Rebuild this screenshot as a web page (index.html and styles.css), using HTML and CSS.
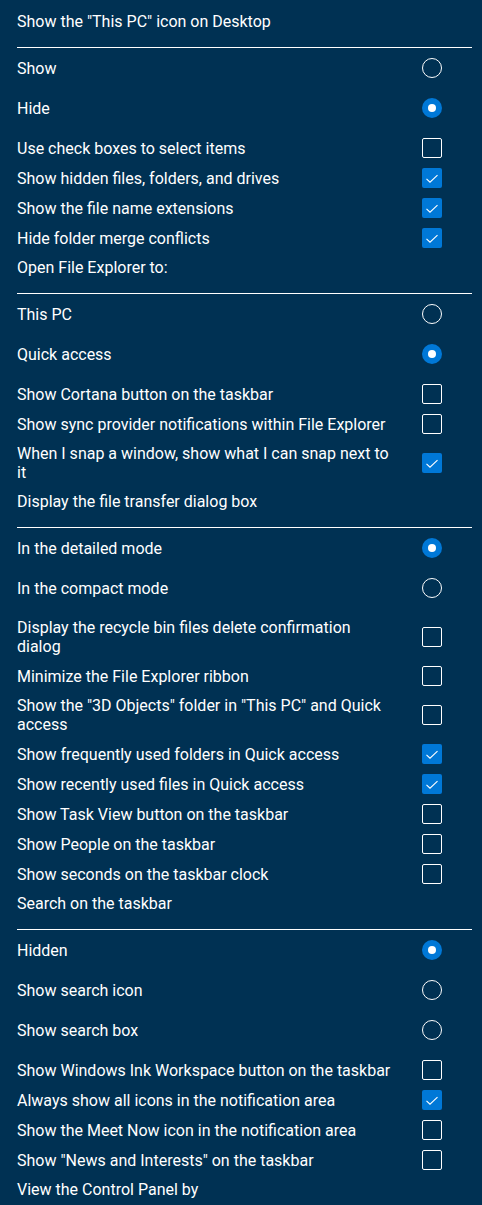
FILE: index.html
```html
<!DOCTYPE html>
<html lang="en">
<head>
<meta charset="utf-8">
<title>Settings</title>
<link rel="stylesheet" href="styles.css">
</head>
<body>
<main class="list">

  <div class="heading">Show the "This PC" icon on Desktop</div>
  <div class="group">
    <div class="radio-row"><span class="label">Show</span><span class="radio"></span></div>
    <div class="radio-row"><span class="label">Hide</span><span class="radio on"></span></div>
  </div>
  <div class="row"><span class="label">Use check boxes to select items</span><span class="box"></span></div>
  <div class="row"><span class="label">Show hidden files, folders, and drives</span><span class="box on"><svg viewBox="0 0 20 20"><path d="M4.5 10.8 L8 14.2 L15.5 7.2"/></svg></span></div>
  <div class="row"><span class="label">Show the file name extensions</span><span class="box on"><svg viewBox="0 0 20 20"><path d="M4.5 10.8 L8 14.2 L15.5 7.2"/></svg></span></div>
  <div class="row"><span class="label">Hide folder merge conflicts</span><span class="box on"><svg viewBox="0 0 20 20"><path d="M4.5 10.8 L8 14.2 L15.5 7.2"/></svg></span></div>

  <div class="heading">Open File Explorer to:</div>
  <div class="group">
    <div class="radio-row"><span class="label">This PC</span><span class="radio"></span></div>
    <div class="radio-row"><span class="label">Quick access</span><span class="radio on"></span></div>
  </div>
  <div class="row"><span class="label">Show Cortana button on the taskbar</span><span class="box"></span></div>
  <div class="row"><span class="label">Show sync provider notifications within File Explorer</span><span class="box"></span></div>
  <div class="row"><span class="label">When I snap a window, show what I can snap next to it</span><span class="box on"><svg viewBox="0 0 20 20"><path d="M4.5 10.8 L8 14.2 L15.5 7.2"/></svg></span></div>

  <div class="heading">Display the file transfer dialog box</div>
  <div class="group">
    <div class="radio-row"><span class="label">In the detailed mode</span><span class="radio on"></span></div>
    <div class="radio-row"><span class="label">In the compact mode</span><span class="radio"></span></div>
  </div>
  <div class="row"><span class="label">Display the recycle bin files delete confirmation dialog</span><span class="box"></span></div>
  <div class="row"><span class="label">Minimize the File Explorer ribbon</span><span class="box"></span></div>
  <div class="row"><span class="label">Show the "3D Objects" folder in "This PC" and Quick access</span><span class="box"></span></div>
  <div class="row"><span class="label">Show frequently used folders in Quick access</span><span class="box on"><svg viewBox="0 0 20 20"><path d="M4.5 10.8 L8 14.2 L15.5 7.2"/></svg></span></div>
  <div class="row"><span class="label">Show recently used files in Quick access</span><span class="box on"><svg viewBox="0 0 20 20"><path d="M4.5 10.8 L8 14.2 L15.5 7.2"/></svg></span></div>
  <div class="row"><span class="label">Show Task View button on the taskbar</span><span class="box"></span></div>
  <div class="row"><span class="label">Show People on the taskbar</span><span class="box"></span></div>
  <div class="row"><span class="label">Show seconds on the taskbar clock</span><span class="box"></span></div>

  <div class="heading">Search on the taskbar</div>
  <div class="group">
    <div class="radio-row"><span class="label">Hidden</span><span class="radio on"></span></div>
    <div class="radio-row"><span class="label">Show search icon</span><span class="radio"></span></div>
    <div class="radio-row"><span class="label">Show search box</span><span class="radio"></span></div>
  </div>
  <div class="row"><span class="label">Show Windows Ink Workspace button on the taskbar</span><span class="box"></span></div>
  <div class="row"><span class="label">Always show all icons in the notification area</span><span class="box on"><svg viewBox="0 0 20 20"><path d="M4.5 10.8 L8 14.2 L15.5 7.2"/></svg></span></div>
  <div class="row"><span class="label">Show the Meet Now icon in the notification area</span><span class="box"></span></div>
  <div class="row"><span class="label">Show "News and Interests" on the taskbar</span><span class="box"></span></div>

  <div class="heading last">View the Control Panel by</div>
</main>
</body>
</html>
```

FILE: styles.css
```css
* { box-sizing: border-box; }

html, body {
  margin: 0;
  padding: 0;
  background: #003153;
}

body {
  font-family: Roboto, "Noto Sans", "Liberation Sans", sans-serif;
  font-size: 16px;
  line-height: 19px;
  color: #ffffff;
}

.list {
  display: flex;
  flex-direction: column;
  padding: 7px 10px 0 17px;
}

.heading {
  height: 41px;
  padding-top: 5px;
  border-bottom: 1px solid #ffffff;
}

.heading.last {
  border-bottom: none;
}

.group {
  display: flex;
  flex-direction: column;
  padding-bottom: 5px;
  padding-right: 30px;
}

.radio-row {
  height: 40px;
  display: flex;
  align-items: center;
  justify-content: space-between;
}

.row {
  min-height: 30px;
  padding: 5px 30px 5px 0;
  display: flex;
  align-items: center;
  justify-content: space-between;
}

.label {
  width: 376px;
}

.radio {
  width: 20px;
  height: 20px;
  border-radius: 50%;
  border: 1px solid #ffffff;
  flex: none;
  display: flex;
  align-items: center;
  justify-content: center;
}

.radio.on {
  border: none;
  background: #0078d7;
}

.radio.on::after {
  content: "";
  width: 8px;
  height: 8px;
  border-radius: 50%;
  background: #ffffff;
}

.box {
  width: 20px;
  height: 20px;
  border: 1px solid #ffffff;
  border-radius: 2px;
  flex: none;
  display: flex;
}

.box.on {
  border: none;
  background: #0078d7;
}

.box svg {
  width: 20px;
  height: 20px;
  fill: none;
  stroke: #ffffff;
  stroke-width: 1.1;
}
```
